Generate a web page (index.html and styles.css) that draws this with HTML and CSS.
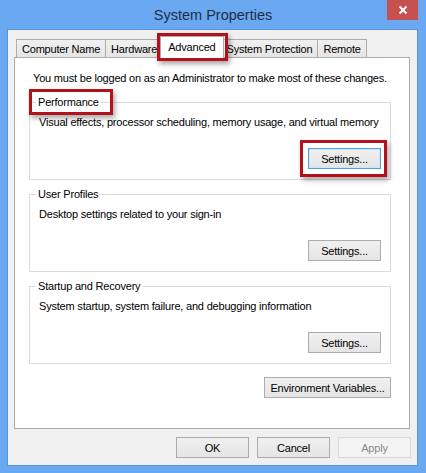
FILE: index.html
```html
<!DOCTYPE html>
<html lang="en">
<head>
    <meta charset="UTF-8">
    <meta name="viewport" content="width=device-width, initial-scale=1.0">
    <title>System Properties</title>
    <link rel="stylesheet" href="styles.css">
</head>
<body>
    <div class="window">
        <!-- Title bar -->
        <div class="titlebar">
            <span class="title">System Properties</span>
            <button class="close" aria-label="Close">
                <svg width="10" height="10" viewBox="0 0 10 10">
                    <path d="M1.5 1.5 L8.5 8.5 M8.5 1.5 L1.5 8.5" stroke="#fff" stroke-width="2"/>
                </svg>
            </button>
        </div>

        <div class="client">
            <!-- Tabs -->
            <div class="tabs">
                <div class="tab">Computer Name</div>
                <div class="tab">Hardware</div>
                <div class="tab active marked">Advanced</div>
                <div class="tab">System Protection</div>
                <div class="tab">Remote</div>
            </div>

            <div class="panel">
                <p class="note">You must be logged on as an Administrator to make most of these changes.</p>

                <fieldset class="group">
                    <legend class="marked">Performance</legend>
                    <p>Visual effects, processor scheduling, memory usage, and virtual memory</p>
                    <div class="actions"><button class="btn default marked">Settings...</button></div>
                </fieldset>

                <fieldset class="group">
                    <legend>User Profiles</legend>
                    <p>Desktop settings related to your sign-in</p>
                    <div class="actions"><button class="btn">Settings...</button></div>
                </fieldset>

                <fieldset class="group">
                    <legend>Startup and Recovery</legend>
                    <p>System startup, system failure, and debugging information</p>
                    <div class="actions"><button class="btn">Settings...</button></div>
                </fieldset>

                <div class="actions env">
                    <button class="btn wide">Environment Variables...</button>
                </div>
            </div>

            <!-- Dialog buttons -->
            <div class="dialog-buttons">
                <button class="btn">OK</button>
                <button class="btn">Cancel</button>
                <button class="btn" disabled>Apply</button>
            </div>
        </div>
    </div>
</body>
</html>
```
FILE: styles.css
```css
* {
    box-sizing: border-box;
}
body {
    margin: 0;
    background: #6aa9f2;
    font-family: "Liberation Sans", Arial, sans-serif;
    font-size: 11px;
    letter-spacing: -0.2px;
    color: #000;
}
.window {
    width: 426px;
    height: 473px;
}

/* title bar */
.titlebar {
    height: 29px;
    position: relative;
    display: flex;
    justify-content: center;
    align-items: center;
}
.title {
    font-size: 14.5px;
    letter-spacing: 0;
    color: #1f2d44;
}
.close {
    position: absolute;
    top: 0;
    right: 8px;
    width: 31px;
    height: 20px;
    padding: 0;
    border: 0;
    background: #c75050;
    display: flex;
    align-items: center;
    justify-content: center;
}

/* client area */
.client {
    margin: 0 8px 0 7px;
    height: 437px;
    border: 1px solid #5c93d8;
    background: #f0f0f0;
}
.tabs {
    display: flex;
    align-items: flex-end;
    height: 21px;
    margin: 6px 0 0 8px;
}
.tab {
    height: 18px;
    padding: 0 5px;
    margin-left: -1px;
    border: 1px solid #acacac;
    border-bottom: 0;
    background: linear-gradient(#f0f0f0, #e5e5e5);
    display: flex;
    align-items: center;
}
.tab:first-child {
    margin-left: 0;
}
.tab.active {
    height: 22px;
    margin: 0 -2px -1px -3px;
    padding: 0 7px 2px;
    background: #fff;
    z-index: 1;
}
.panel {
    height: 372px;
    margin: 0 7px 0 6px;
    padding: 13px 18px 0 14px;
    border: 1px solid #acacac;
    background: #fff;
}
.panel p {
    margin: 0;
    line-height: 15px;
}
.note {
    margin-left: 4px !important;
}

/* group boxes */
.group {
    margin: 7px 0 0;
    padding: 0 9px 10px;
    border: 1px solid #dcdcdc;
    min-width: 0;
}
.group:first-of-type {
    margin-top: 9px;
}
.group legend {
    padding: 0 2px;
    margin-left: -3px;
    line-height: 14px;
}
.group p {
    margin-top: 6px;
}
.actions {
    display: flex;
    justify-content: flex-end;
    margin-top: 18px;
}
.env {
    margin-top: 13px;
}

/* buttons */
.btn {
    width: 73px;
    height: 21px;
    padding: 0;
    border: 1px solid #acacac;
    background: linear-gradient(#f0f0f0, #e5e5e5);
    font: inherit;
    letter-spacing: inherit;
    color: #000;
}
.btn.default {
    border-color: #4ea0e6;
    box-shadow: inset 0 0 0 1px #cfe6f9;
}
.btn.wide {
    width: 127px;
}
.btn:disabled {
    color: #8a8a8a;
    border-color: #d9d9d9;
    background: #f3f3f3;
}
.dialog-buttons {
    display: flex;
    justify-content: flex-end;
    gap: 8px;
    margin-top: 8px;
    padding-right: 6px;
}

/* red highlight annotations */
.marked {
    position: relative;
}
.marked::after {
    content: "";
    position: absolute;
    border: 3px solid #b3121a;
    box-shadow: 2px 3px 5px rgba(0, 0, 0, 0.35);
    pointer-events: none;
}
.tab.marked::after {
    inset: -4px -5px -3px -4px;
}
legend.marked::after {
    inset: -6px -12px -6px -7px;
}
.btn.marked::after {
    inset: -9px -7px -9px -9px;
}
```
